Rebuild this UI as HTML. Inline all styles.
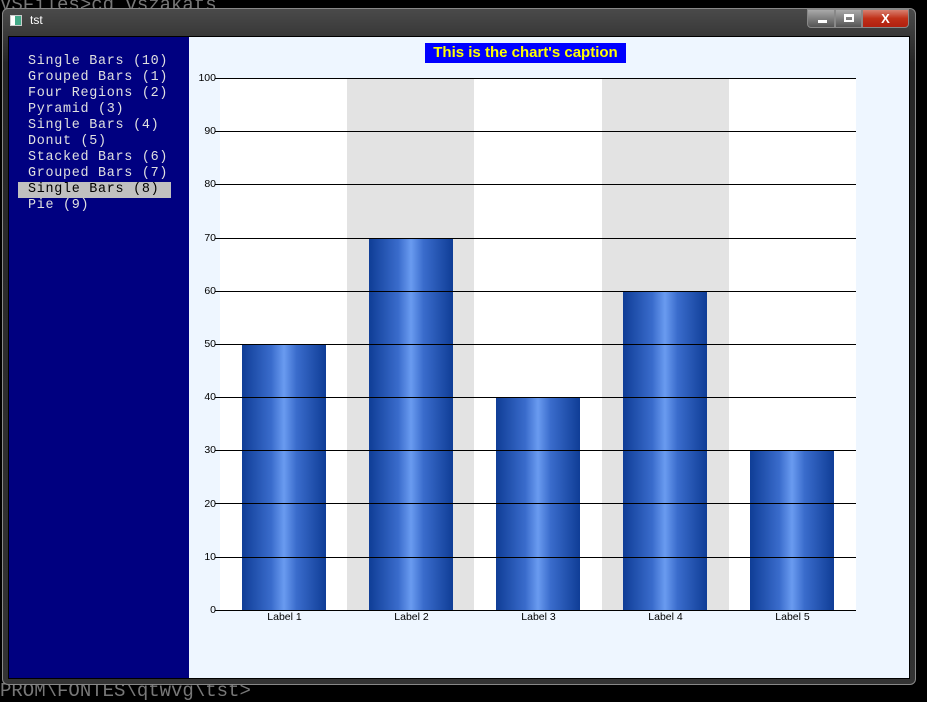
<!DOCTYPE html>
<html><head><style>
*{margin:0;padding:0;box-sizing:border-box}
body{width:927px;height:691px;background:#000;position:relative;overflow:hidden;font-family:"Liberation Sans",sans-serif}
.a{position:absolute}
.con{font-family:"Liberation Mono",monospace;color:#777;font-size:19px}
.menu div{font-family:"Liberation Mono",monospace;font-size:13.4px;letter-spacing:0.72px;color:#e0e0e0;height:16px;line-height:16px;padding-left:10px;white-space:pre}
.yl{font-size:10.5px;color:#000;text-align:right;width:30px;left:186px}
.xl{font-size:10.5px;color:#000;text-align:center;width:127px}
.bar{background:linear-gradient(90deg,#0f3d96 0%,#3a6ccc 35%,#6a9bf0 50%,#3a6ccc 65%,#0f3d96 100%)}
</style></head><body>
<div class="a con" style="left:0;top:-6px">VSFiles&gt;cd vszakats</div>
<div class="a con" style="left:0;top:680px">PROM\FONTES\qtwvg\tst&gt;</div>
<div class="a" style="left:2px;top:8px;width:914px;height:677px;border-radius:6px;border:1px solid #888;background:linear-gradient(180deg,#4a4a4a 0%,#262626 8%,#333 100%)"></div>
<div class="a" style="left:10px;top:15px;width:12px;height:11px;background:linear-gradient(90deg,#fff 0,#fff 40%,#4a8 40%,#4a8 100%);border:1px solid #ccc"></div>
<div class="a" style="left:30px;top:13px;color:#fff;font-size:12px">tst</div>
<div class="a" style="left:807px;top:9px;width:28px;height:19px;border:1px solid #888;border-radius:0 0 0 4px;background:linear-gradient(#aaa,#555)"><div class="a" style="left:10px;top:10px;width:9px;height:3px;background:#fff"></div></div>
<div class="a" style="left:835px;top:9px;width:27px;height:19px;border:1px solid #888;background:linear-gradient(#aaa,#555)"><div class="a" style="left:8px;top:4px;width:10px;height:8px;border:2px solid #fff;border-top-width:3px"></div></div>
<div class="a" style="left:862px;top:9px;width:47px;height:19px;border:1px solid #888;border-radius:0 0 4px 0;background:linear-gradient(#d88070,#c03018 50%,#b02010);color:#fff;font-weight:bold;font-size:13px;text-align:center;line-height:17px">X</div>
<div class="a" style="left:8px;top:36px;width:902px;height:643px;border:1px solid #000;background:#eef6ff"></div>
<div class="a" style="left:9px;top:37px;width:180px;height:641px;background:#000080"></div>
<div class="a menu" style="left:18px;top:54px;width:153px">
<div>Single Bars (10)</div><div>Grouped Bars (1)</div><div>Four Regions (2)</div><div>Pyramid (3)</div><div>Single Bars (4)</div><div>Donut (5)</div><div>Stacked Bars (6)</div><div>Grouped Bars (7)</div><div style="background:#c0c0c0;color:#000">Single Bars (8)</div><div>Pie (9)</div>
</div>
<div class="a" style="left:425px;top:43px;width:201px;height:20px;background:#0000ff;color:#ffff00;font-weight:bold;font-size:15px;text-align:center;line-height:20px">This is the chart's caption</div>
<div class="a" style="left:220px;top:78px;width:636px;height:532px;background:#fff"></div>
<div class="a" style="left:347px;top:78px;width:127px;height:532px;background:#e3e3e3"></div>
<div class="a" style="left:602px;top:78px;width:127px;height:532px;background:#e3e3e3"></div>
<div class="a bar" style="left:242px;top:344px;width:84px;height:266px"></div>
<div class="a bar" style="left:369px;top:238px;width:84px;height:372px"></div>
<div class="a bar" style="left:496px;top:397px;width:84px;height:213px"></div>
<div class="a bar" style="left:623px;top:291px;width:84px;height:319px"></div>
<div class="a bar" style="left:750px;top:450px;width:84px;height:160px"></div>
<div class="a" style="left:215px;top:78px;width:641px;height:1px;background:#000;box-shadow:0 53px #000,0 106px #000,0 160px #000,0 213px #000,0 266px #000,0 319px #000,0 372px #000,0 425px #000,0 479px #000,0 532px #000"></div>
<div class="a yl" style="top:72px">100</div><div class="a yl" style="top:125px">90</div><div class="a yl" style="top:178px">80</div><div class="a yl" style="top:232px">70</div><div class="a yl" style="top:285px">60</div><div class="a yl" style="top:338px">50</div><div class="a yl" style="top:391px">40</div><div class="a yl" style="top:444px">30</div><div class="a yl" style="top:498px">20</div><div class="a yl" style="top:551px">10</div><div class="a yl" style="top:604px">0</div>
<div class="a xl" style="left:221px;top:611px">Label 1</div><div class="a xl" style="left:348px;top:611px">Label 2</div><div class="a xl" style="left:475px;top:611px">Label 3</div><div class="a xl" style="left:602px;top:611px">Label 4</div><div class="a xl" style="left:729px;top:611px">Label 5</div>
</body></html>
